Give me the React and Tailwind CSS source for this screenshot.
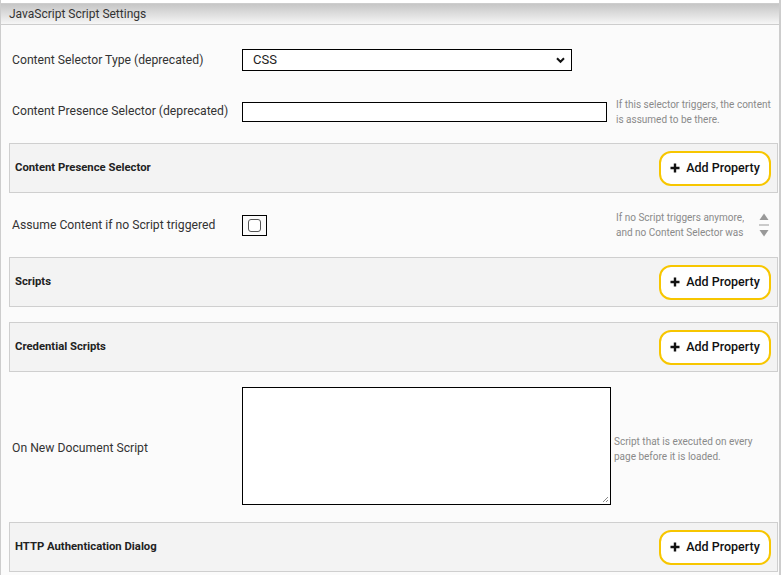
const font = { fontFamily: 'Roboto, "Liberation Sans", sans-serif' }

function AddProperty() {
  return (
    <button className="flex items-center gap-[6px] h-[35px] w-[112px] justify-center rounded-[12px] border-2 border-[#f7c600] bg-white text-[12.5px] font-medium text-[#111]">
      <svg width="10" height="10" viewBox="0 0 10 10">
        <path d="M5 0.5v9M0.5 5h9" stroke="#111" strokeWidth="2.4" />
      </svg>
      Add Property
    </button>
  )
}

function Section({ title }) {
  return (
    <div className="ml-[8px] mr-[1px] mb-[15px] h-[50px] flex items-center justify-between border border-[#cfcfcf] bg-[#f3f3f3] pl-[5px] pr-[6px]">
      <span className="text-[11.3px] font-bold text-[#222]">{title}</span>
      <AddProperty />
    </div>
  )
}

function Help({ children, className = '' }) {
  return <div className={`text-[10px] leading-[15px] text-[#8a8a8a] ${className}`}>{children}</div>
}

export default function App() {
  return (
    <div className="w-[781px] h-[575px] overflow-hidden bg-white" style={font}>
      <div className="h-full border-l border-r-2 border-[#cdcdcd]">
        <div className="h-[3px] bg-white" />
        <div className="h-[22px] border-y border-[#cdcdcd] bg-gradient-to-b from-[#c6c6c6] to-[#f6f6f6] flex items-center pl-[8px] text-[12px] text-[#333]">
          JavaScript Script Settings
        </div>
        <div className="h-[550px] bg-[#fbfbfb] text-[12.2px] text-[#333]">
          {/* selector type */}
          <div className="h-[70px] flex items-center">
            <div className="w-[241px] pl-[11px]">Content Selector Type (deprecated)</div>
            <div className="relative w-[330px] h-[22px] border border-black bg-white flex items-center pl-[10px] text-[13px] text-[#222]">
              CSS
              <svg className="absolute right-[6px] top-[7px]" width="9" height="7" viewBox="0 0 9 7">
                <path d="M1 1.2l3.5 3.6L8 1.2" fill="none" stroke="#111" strokeWidth="2" />
              </svg>
            </div>
          </div>

          {/* presence selector */}
          <div className="h-[33px] mb-[15px] flex items-center">
            <div className="w-[241px] pl-[11px]">Content Presence Selector (deprecated)</div>
            <div className="w-[365px] h-[20px] border border-black bg-white" />
            <Help className="ml-[9px]">
              If this selector triggers, the content
              <br />
              is assumed to be there.
            </Help>
          </div>

          <Section title="Content Presence Selector" />

          {/* assume content */}
          <div className="h-[34px] mb-[15px] flex items-center">
            <div className="w-[241px] pl-[11px]">Assume Content if no Script triggered</div>
            <div className="w-[25px] h-[21px] border border-black flex items-center justify-center">
              <div className="w-[13px] h-[13px] rounded-[3px] border border-[#555] bg-white" />
            </div>
            <Help className="ml-[349px] h-[30px] overflow-hidden">
              If no Script triggers anymore,
              <br />
              and no Content Selector was
            </Help>
            <svg className="ml-[14px]" width="12" height="28" viewBox="0 0 12 28">
              <path d="M1.5 9L6 2.5L10.5 9Z" fill="#999" />
              <path d="M1 14h10" stroke="#999" strokeWidth="1" />
              <path d="M1.5 19L6 25.5L10.5 19Z" fill="#999" />
            </svg>
          </div>

          <Section title="Scripts" />
          <Section title="Credential Scripts" />

          {/* new document script */}
          <div className="h-[120px] mb-[15px] flex items-center">
            <div className="w-[241px] pl-[11px] pt-[2px]">On New Document Script</div>
            <div className="relative w-[369px] h-[118px] border border-black bg-white self-start">
              <svg className="absolute right-[1px] bottom-[1px]" width="8" height="8" viewBox="0 0 8 8">
                <path d="M7 2L2 7M7 5L5 7" stroke="#888" strokeWidth="1" />
              </svg>
            </div>
            <Help className="ml-[3px] mt-[4px]">
              Script that is executed on every
              <br />
              page before it is loaded.
            </Help>
          </div>

          <Section title="HTTP Authentication Dialog" />
        </div>
      </div>
    </div>
  )
}
